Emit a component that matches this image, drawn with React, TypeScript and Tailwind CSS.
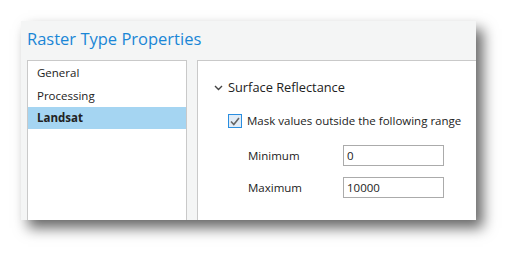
import React from "react";

const font = { fontFamily: '"Open Sans", "Noto Sans", sans-serif' };

export default function App() {
  return (
    <div className="w-[518px] h-[262px] bg-white pl-[21px] pt-[21px]" style={font}>
      <div className="w-[455px] h-[199px] bg-[#f4f5f5] flex flex-col shadow-[7px_8px_13px_rgba(0,0,0,0.6)]">
        {/* title */}
        <div className="h-[39px] pl-[6px] pt-[3px] text-[16.5px] leading-[30px] text-[#1a86d6]">
          Raster Type Properties
        </div>

        <div className="flex flex-1 min-h-0">
          {/* nav list */}
          <div className="ml-[6px] w-[160px] bg-white border-t border-l border-r border-[#c9c9c9] pt-[1px] text-[11.5px] text-[#222]">
            <div className="h-[22px] leading-[22px] pl-[9px]">General</div>
            <div className="h-[23px] leading-[23px] pl-[9px]">Processing</div>
            <div className="h-[22px] leading-[22px] pl-[9px] bg-[#a5d5f2] font-bold">Landsat</div>
          </div>

          {/* settings panel */}
          <div className="ml-[10px] flex-1 bg-white border-t border-l border-[#c9c9c9] pl-[16px] pt-[17px] text-[11.5px] text-[#222]">
            <div className="flex items-center h-[20px]">
              <svg width="9" height="6" viewBox="0 0 9 6" className="mr-[5px]">
                <path d="M1 1l3.5 3.5L8 1" fill="none" stroke="#444" strokeWidth="1.4" />
              </svg>
              <span className="text-[12.8px]">Surface Reflectance</span>
            </div>

            <div className="flex items-center h-[16px] mt-[15px] pl-[14px]">
              <div className="w-[14px] h-[14px] border border-[#2a8ee0] bg-[#e1ecf7] flex items-center justify-center mr-[5px]">
                <svg width="10" height="9" viewBox="0 0 10 9">
                  <path d="M1 4.5l2.8 3L9 1" fill="none" stroke="#666" strokeWidth="1.6" />
                </svg>
              </div>
              <span>Mask values outside the following range</span>
            </div>

            <div className="mt-[16px] pl-[34px] flex flex-col gap-[11px]">
              <div className="flex items-center">
                <span className="w-[95px]">Minimum</span>
                <div className="w-[101px] h-[21px] border border-[#ababab] pl-[3px] leading-[19px]">0</div>
              </div>
              <div className="flex items-center">
                <span className="w-[95px]">Maximum</span>
                <div className="w-[101px] h-[21px] border border-[#ababab] pl-[3px] leading-[19px]">10000</div>
              </div>
            </div>
          </div>
        </div>
      </div>
    </div>
  );
}
